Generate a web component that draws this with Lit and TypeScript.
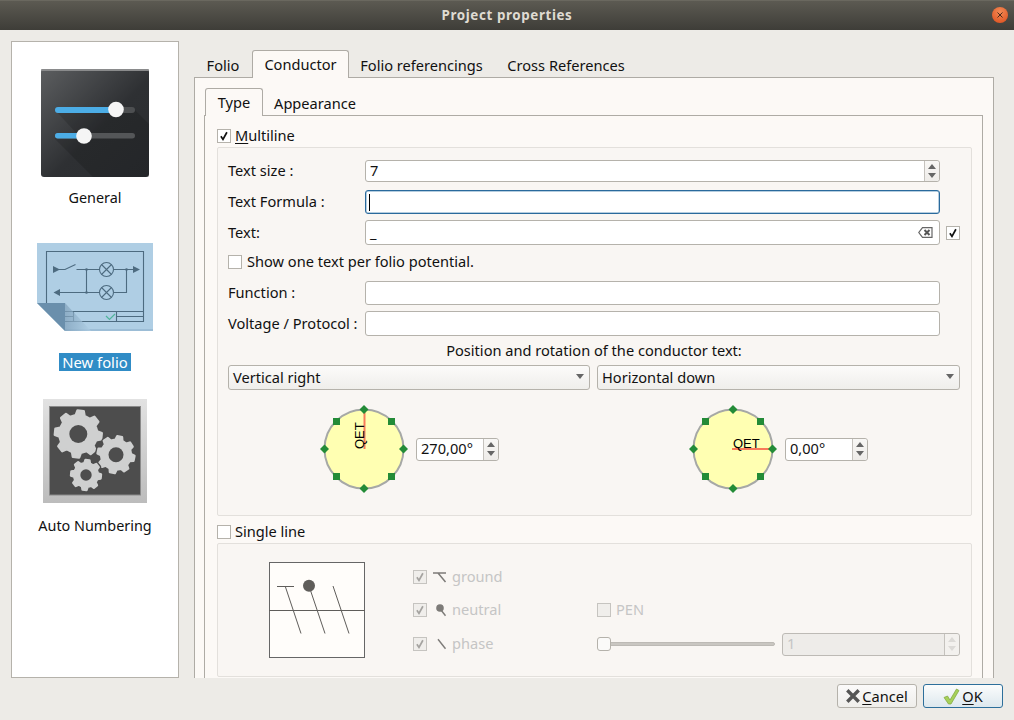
import { LitElement, html, css, svg } from "lit";
import { customElement } from "lit/decorators.js";

function gearPath(cx: number, cy: number, R: number, r: number, n: number, phase = 0) {
  const pts: string[] = [];
  const step = (Math.PI * 2) / n;
  for (let i = 0; i < n; i++) {
    const a = phase + i * step;
    const offs: [number, number][] = [
      [-0.3, r],
      [-0.17, R],
      [0.17, R],
      [0.3, r],
    ];
    for (const [o, rad] of offs) {
      const t = a + o * step;
      pts.push(`${(cx + rad * Math.cos(t)).toFixed(2)} ${(cy + rad * Math.sin(t)).toFixed(2)}`);
    }
  }
  return "M" + pts.join("L") + "Z";
}

const checkMark = html`<svg class="tick" viewBox="0 0 14 14"><path d="M3.4 7.2 5.8 11 10.4 2.6" fill="none" stroke="currentColor" stroke-width="2"/></svg>`;

const spinArrows = html`<span class="spin-btn"><svg viewBox="0 0 8 14" width="8" height="14"><path d="M4 0 8 5H0Z M0 9H8L4 14Z" fill="currentColor"/></svg></span>`;

function dial(angle: "v" | "h") {
  const c = 50;
  const d = 27.5;
  const diamonds = [[c, c - 39.5], [c + 39.5, c], [c, c + 39.5], [c - 39.5, c]];
  const squares = [[c - d, c - d], [c + d, c - d], [c - d, c + d], [c + d, c + d]];
  return html`<svg class="dial" width="100" height="100" viewBox="0 0 100 100">
    <circle cx="50" cy="50" r="39.5" fill="#ffffb2" stroke="#a6a8a6" stroke-width="2"/>
    ${angle === "v"
      ? svg`<path d="M50.5 50V11" stroke="#f97a5a" stroke-width="2"/>
           <text transform="translate(49.5 50) rotate(-90)" class="qet">QET</text>`
      : svg`<path d="M49 50H89" stroke="#f97a5a" stroke-width="2"/>
           <text x="50" y="49" class="qet">QET</text>`}
    ${squares.map(([x, y]) => svg`<rect x=${x - 3.5} y=${y - 3.5} width="7" height="7" fill="#238b37"/>`)}
    ${diamonds.map(([x, y]) => svg`<path d="M${x} ${y - 4.5}L${x + 4.5} ${y}L${x} ${y + 4.5}L${x - 4.5} ${y}Z" fill="#238b37"/>`)}
  </svg>`;
}

@customElement("app-root")
export class AppRoot extends LitElement {
  static styles = css`
    :host { display: block; width: 1014px; height: 720px; overflow: hidden; background: #edebe7;
      font: 14.6px "Noto Sans", "Open Sans", sans-serif; color: #111; }
    * { box-sizing: border-box; }
    svg { display: block; flex: none; }
    u { text-underline-offset: 2px; }

    .titlebar { height: 30px; display: flex; align-items: center; justify-content: center; position: relative;
      background: linear-gradient(#5c5a52, #3e3d38); border-top: 1px solid #6a685f; padding-bottom: 2px;
      color: #dfdbd2; font-weight: 700; font-size: 13.4px; letter-spacing: 0.6px; }
    .close { position: absolute; right: 6px; top: 6px; width: 16px; height: 16px; border-radius: 50%;
      background: radial-gradient(circle at 50% 30%, #f38a55, #dd4d1c); display: flex; align-items: center; justify-content: center; }

    .main { height: 648px; padding: 11px 20px 0 11px; display: flex; gap: 15px; }
    .sidebar { width: 168px; height: 637px; background: #fff; border: 1px solid #b5b2ab;
      display: flex; flex-direction: column; align-items: center; padding-top: 27px; font-size: 14.4px; }
    .sidebar .label { height: 18px; line-height: 18px; white-space: nowrap; }
    .sel { background: #308cc6; color: #fff; padding: 0 3px; font-size: 14.8px; }
    .m1 { margin-top: 12px; } .m2 { margin-top: 36px; } .m3 { margin-top: 22px; }
    .m4 { margin-top: 28px; } .m5 { margin-top: 14px; }

    .right { width: 800px; height: 637px; overflow: hidden; padding-top: 9px; }
    .tabbar { display: flex; height: 28px; position: relative; z-index: 1; align-items: flex-end; }
    .tab { height: 26px; line-height: 26px; text-align: center; white-space: nowrap; }
    .tab.on { height: 28px; line-height: 27px; background: #fcf9f6; border: 1px solid #aeaba5; border-bottom: none; border-radius: 3px 3px 0 0; }
    .w58 { width: 58px; } .w97 { width: 97px; } .w145 { width: 145px; } .w144 { width: 144px; }
    .pane { border: 1px solid #aeaba5; background: #fcf9f6; margin-top: -1px; padding: 10px 10px 10px 9px; }
    .inner-tabs { margin-left: 1px; }
    .w59 { width: 58px; } .w104 { width: 104px; }
    .inner { margin-top: -1px; border: 1px solid #aeaba5; padding: 13px 10px 10px 12px; background: #fcf9f6; }

    .check { display: flex; align-items: center; gap: 4px; height: 14px; white-space: nowrap; }
    .check.wide { gap: 5px; }
    .check > span:last-child { padding-bottom: 2px; }
    .box { width: 14px; height: 14px; flex: none; border: 1px solid #b5b2ab; background: #fff; color: #111; }
    .check > .box { padding-bottom: 0; }
    .tick { width: 12px; height: 12px; }
    .check.dis { color: #c5c5c5; }
    .check.dis .box { background: #f0eeeb; border-color: #c6c4c0; color: #a5a3a0; }

    .group { border: 1px solid #e3e0dc; border-radius: 2px; background: #f9f6f3; }
    .g1 { margin-top: 4px; height: 369px; padding: 12px 11px 0 10px; display: flex; flex-direction: column; }
    .g2 { margin-top: 4px; height: 134px; display: flex; }

    .row { display: grid; grid-template-columns: 137px 575px 20px; align-items: center; white-space: nowrap; }
    .row > span:first-child { padding-bottom: 2px; }
    .field { background: #fff; border: 1px solid #b5b2ab; border-radius: 3px; display: flex; align-items: center;
      padding-left: 4px; }
    .field .grow { padding-bottom: 2px; }
    .h22 { height: 22px; } .h24 { height: 24px; } .h25 { height: 25px; }
    .focus { border: 1px solid #2a6a9c; box-shadow: inset 0 0 0 .5px #6d9cc0; }
    .caret { width: 1px; height: 17px; background: #000; margin-left: -1px; }
    .grow { flex: 1; }
    .spin-btn { width: 15px; align-self: stretch; flex: none; border-left: 1px solid #c5c2bd; background: linear-gradient(#f8f7f5, #eeece9);
      border-radius: 0 3px 3px 0; display: flex; align-items: center; justify-content: center; color: #666; }
    .clear { margin-right: 6px; }
    .rowcheck { margin-left: 6px; }
    .mt8 { margin-top: 8px; } .mt6 { margin-top: 6px; } .mt9 { margin-top: 9px; } .mt10 { margin-top: 10px; } .mt12 { margin-top: 12px; } .mt5 { margin-top: 5px; }

    .center { height: 18px; line-height: 17px; text-align: center; white-space: nowrap; }
    .combos { display: grid; grid-template-columns: 362px 363px; gap: 7px; }
    .combo { height: 25px; border: 1px solid #b5b2ab; border-radius: 3px; background: linear-gradient(#fcfbfa, #efeeeb);
      display: flex; align-items: center; justify-content: space-between; padding: 0 5px 2px 4px; white-space: nowrap; }
    .dials { display: grid; grid-template-columns: 362px 363px; gap: 7px; margin-top: 9px; }
    .dialbox { display: flex; align-items: center; gap: 2px; padding-left: 86px; }
    .spin { width: 83px; height: 23px; }
    .dial .qet { font: 13px "Liberation Sans", sans-serif; fill: #000; }

    .preview { margin: 18px 48px 0 51px; width: 96px; height: 96px; flex: none; }
    .opts { margin-top: 26px; display: grid; grid-template-columns: 184px 363px; grid-template-rows: 33px 34px 14px; align-items: start; }
    .mini { width: 14px; height: 14px; margin: 0 1px 0 2px; }
    .sliderrow { display: flex; align-items: center; gap: 7px; height: 14px; }
    .slider { width: 178px; height: 14px; display: flex; align-items: center; position: relative; }
    .track { width: 100%; height: 4px; background: #c9c6c1; border: 1px solid #bdbab5; border-radius: 2px; }
    .thumb { position: absolute; left: 0; top: 0; width: 14px; height: 14px; border-radius: 3px; border: 1px solid #b5b2ab; background: #fbfaf9; }
    .spin.dis { width: 178px; height: 23px; flex: none; background: #eeece9; color: #c5c5c5; border-color: #bdbab5; }
    .spin.dis .spin-btn { color: #dcdad7; background: #f3f1ee; }

    .footer { height: 42px; display: flex; justify-content: flex-end; gap: 6px; padding: 6px 11px 0 0; }
    .btn { width: 80px; height: 24px; border: 1px solid #b5b2ab; border-radius: 3px; background: linear-gradient(#fbfafa, #efeeeb);
      display: flex; align-items: center; justify-content: center; gap: 2px; }
    .btn.ok { border-color: #2d6f9b; background: linear-gradient(#fbfcfc, #dde8ee); }
  `;

  private iconGeneral() {
    return html`<svg width="108" height="108" viewBox="0 0 108 108">
      <defs>
        <linearGradient id="gbg" x1="0" y1="0" x2="1" y2="1">
          <stop offset="0" stop-color="#5c5e60"/><stop offset=".55" stop-color="#2e3033"/><stop offset="1" stop-color="#2b2d30"/>
        </linearGradient>
      </defs>
      <rect width="108" height="108" rx="3" fill="url(#gbg)"/>
      <rect width="108" height="2" y="0" rx="1" fill="#8a8b8c"/>
      <path d="M14 41H94L108 55V108H52L14 70V67H38Z" fill="#000" opacity=".14"/>
      <rect x="14" y="38" width="80" height="6" rx="3" fill="#4d4f51"/>
      <rect x="14" y="38" width="62" height="6" rx="3" fill="#4cade6"/>
      <circle cx="75" cy="40.5" r="7.8" fill="#f5f5f5"/>
      <rect x="14" y="64" width="80" height="5.4" rx="2.7" fill="#545658"/>
      <rect x="14" y="64" width="30" height="5.4" rx="2.7" fill="#4cade6"/>
      <circle cx="43" cy="67" r="7.8" fill="#f5f5f5"/>
    </svg>`;
  }

  private iconFolio() {
    const s = "#4d6b80";
    return html`<svg width="116" height="88" viewBox="37 243 116 88">
      <defs>
        <linearGradient id="fold" x1="0" y1="0" x2="1" y2="0">
          <stop offset="0" stop-color="#7fa0ba"/><stop offset="1" stop-color="#afcee4"/>
        </linearGradient>
      </defs>
      <path d="M37 243H153V331H65L37 303Z" fill="#afcee4"/>
      <rect x="65" y="329" width="88" height="2" fill="#9cbdd6"/>
      <g fill="none" stroke=${s} stroke-width="1.1">
        <path d="M46.5 303V251.5H143.5V321.5H65"/>
        <path d="M65 311.5H143.5M65 316.5H73.5M116.5 316.5H143.5M73.5 311.5V321.5M116.5 311.5V321.5"/>
        <path d="M59 269.5H65L75.5 264.5M76.5 269.5H99.5M114 269.5H133M59 292.5H99.5M114 292.5H126.5V269.5M86.5 269.5V292.5"/>
        <circle cx="106.5" cy="269.5" r="7"/><circle cx="106.5" cy="292.5" r="7"/>
        <path d="M101.5 264.5 111.5 274.5M111.5 264.5 101.5 274.5M101.5 287.5 111.5 297.5M111.5 287.5 101.5 297.5"/>
      </g>
      <path d="M53 266V273L60 269.5Z M133 266V273L140 269.5Z M53.5 292.5 60 289V296Z" fill=${s}/>
      <path d="M65 303 91 331H65Z" fill="url(#fold)" opacity=".7"/>
      <circle cx="86.5" cy="269.5" r="1.3" fill=${s}/><circle cx="126.5" cy="269.5" r="1.3" fill=${s}/><circle cx="86.5" cy="292.5" r="1.3" fill=${s}/>
      <path d="M106 316 109.5 319.5 115 314" fill="none" stroke="#4fb49b" stroke-width="1.2"/>
      <path d="M37 303H65V331Z" fill="#6a8fac"/>
    </svg>`;
  }

  private iconGears() {
    const gears: [number, number, number, number, number, number][] = [
      [35.3, 35, 23.5, 19, 9, 0.1],
      [73, 55.7, 18.5, 15, 7.5, 0.2],
      [43, 76, 15, 12, 5.7, 0.1],
    ];
    return html`<svg width="104" height="104" viewBox="0 0 104 104">
      <defs>
        <linearGradient id="gframe" x1="0" y1="0" x2="0" y2="1"><stop offset="0" stop-color="#e2e2e2"/><stop offset="1" stop-color="#bcbcbc"/></linearGradient>
      </defs>
      <rect width="104" height="104" fill="url(#gframe)"/>
      <rect x="6.5" y="7.5" width="91" height="88.5" fill="#4d4d4d" stroke="#8a8a8a" stroke-width="1"/>
      ${gears.map(([x, y, R, r, h, p]) => svg`
        <path d=${gearPath(x, y, R, r, 8, p)} fill="#4d4d4d" stroke="#4d4d4d" stroke-width="5" stroke-linejoin="round"/>
        <path d=${gearPath(x, y, R, r, 8, p)} fill="#cfd0d0" stroke="#cfd0d0" stroke-width="2.4" stroke-linejoin="round"/>
        <circle cx=${x} cy=${y} r=${h} fill="#4d4d4d"/>`)}
    </svg>`;
  }

  private preview() {
    const s = "#5f5d5a";
    return html`<svg class="preview" viewBox="269 562 96 96">
      <rect x="269.5" y="562.5" width="95" height="95" fill="#fffdfa" stroke="#666" stroke-width="1"/>
      <g stroke=${s} stroke-width="1" fill="none">
        <path d="M269 610.5H365M277 586.5H294M285.3 586.5 301 633.5M309 586 325 633.5M333 586 349 633.5"/>
      </g>
      <circle cx="309" cy="585.7" r="6" fill=${s}/>
    </svg>`;
  }

  private check(on: boolean, label: unknown, cls = "", icon: unknown = null) {
    return html`<div class="check ${cls}"><span class="box">${on ? checkMark : ""}</span>${icon}<span>${label}</span></div>`;
  }

  render() {
    const grey = "#7d7b78";
    const groundIcon = html`<svg class="mini" viewBox="0 0 14 14"><path d="M0 3H13M5 3 12.5 12" stroke=${grey} stroke-width="1.5" fill="none"/></svg>`;
    const neutralIcon = html`<svg class="mini" viewBox="0 0 14 14"><circle cx="7" cy="5" r="3.8" fill=${grey}/><path d="M8 7 12.5 12.7" stroke=${grey} stroke-width="1.4"/></svg>`;
    const phaseIcon = html`<svg class="mini" viewBox="0 0 14 14"><path d="M5 2.3 12.5 11.7" stroke=${grey} stroke-width="1.4"/></svg>`;

    return html`
      <div class="titlebar">Project properties
        <span class="close"><svg width="8" height="8" viewBox="0 0 8 8"><path d="M1.5 1.5 6.5 6.5M6.5 1.5 1.5 6.5" stroke="#4a2a1a" stroke-width="1"/></svg></span>
      </div>
      <div class="main">
        <nav class="sidebar">
          ${this.iconGeneral()}
          <div class="label m1">General</div>
          <div class="m2">${this.iconFolio()}</div>
          <div class="label sel m3">New folio</div>
          <div class="m4">${this.iconGears()}</div>
          <div class="label m5">Auto Numbering</div>
        </nav>
        <section class="right">
          <div class="tabbar">
            <div class="tab w58">Folio</div>
            <div class="tab w97 on">Conductor</div>
            <div class="tab w145">Folio referencings</div>
            <div class="tab w144">Cross References</div>
          </div>
          <div class="pane">
            <div class="tabbar inner-tabs">
              <div class="tab w59 on">Type</div>
              <div class="tab w104">Appearance</div>
            </div>
            <div class="inner">
              ${this.check(true, html`<u>M</u>ultiline`)}
              <div class="group g1">
                <div class="row"><span>Text size :</span>
                  <div class="field h22"><span class="grow">7</span>${spinArrows}</div></div>
                <div class="row mt8"><span>Text Formula :</span>
                  <div class="field h24 focus"><span class="caret"></span></div></div>
                <div class="row mt6"><span>Text:</span>
                  <div class="field h25"><span class="grow">_</span>
                    <svg class="clear" width="15" height="11" viewBox="0 0 15 11"><path d="M4.5 .7H14V10.3H4.5L.8 5.5Z" fill="#fff" stroke="#666" stroke-width="1.2"/><path d="M6.5 3 11.5 8M11.5 3 6.5 8" stroke="#555" stroke-width="2"/></svg>
                  </div>
                  <span class="box rowcheck">${checkMark}</span></div>
                <div class="mt10">${this.check(false, "Show one text per folio potential.", "wide")}</div>
                <div class="row mt12"><span>Function :</span><div class="field h24"></div></div>
                <div class="row mt6"><span>Voltage / Protocol :</span><div class="field h25"></div></div>
                <div class="center mt6">Position and rotation of the conductor text:</div>
                <div class="combos mt5">
                  <div class="combo">Vertical right<svg width="8" height="5" viewBox="0 0 8 5"><path d="M0 0H8L4 5Z" fill="#666"/></svg></div>
                  <div class="combo">Horizontal down<svg width="8" height="5" viewBox="0 0 8 5"><path d="M0 0H8L4 5Z" fill="#666"/></svg></div>
                </div>
                <div class="dials">
                  <div class="dialbox">${dial("v")}<div class="field spin"><span class="grow">270,00°</span>${spinArrows}</div></div>
                  <div class="dialbox">${dial("h")}<div class="field spin"><span class="grow">0,00°</span>${spinArrows}</div></div>
                </div>
              </div>
              <div class="mt9">${this.check(false, "Single line")}</div>
              <div class="group g2">
                ${this.preview()}
                <div class="opts">
                  ${this.check(true, "ground", "dis", groundIcon)}<span></span>
                  ${this.check(true, "neutral", "dis", neutralIcon)}${this.check(false, "PEN", "dis wide")}
                  ${this.check(true, "phase", "dis", phaseIcon)}
                  <div class="sliderrow">
                    <div class="slider"><div class="track"></div><div class="thumb"></div></div>
                    <div class="field spin dis"><span class="grow">1</span>${spinArrows}</div>
                  </div>
                </div>
              </div>
            </div>
          </div>
        </section>
      </div>
      <footer class="footer">
        <div class="btn"><svg width="14" height="14" viewBox="0 0 14 14"><path d="M2.5 2.5 11.5 11.5M11.5 2.5 2.5 11.5" stroke="#555" stroke-width="3.4" stroke-linecap="square"/></svg><span><u>C</u>ancel</span></div>
        <div class="btn ok"><svg width="17" height="17" viewBox="0 0 17 17"><path d="M1 9.5 4.5 8 7 12 13.5 1 16 2.5 8 16H5.5Z" fill="#a6d15a" stroke="#7da33a" stroke-width=".7"/></svg><span><u>O</u>K</span></div>
      </footer>
    `;
  }
}
